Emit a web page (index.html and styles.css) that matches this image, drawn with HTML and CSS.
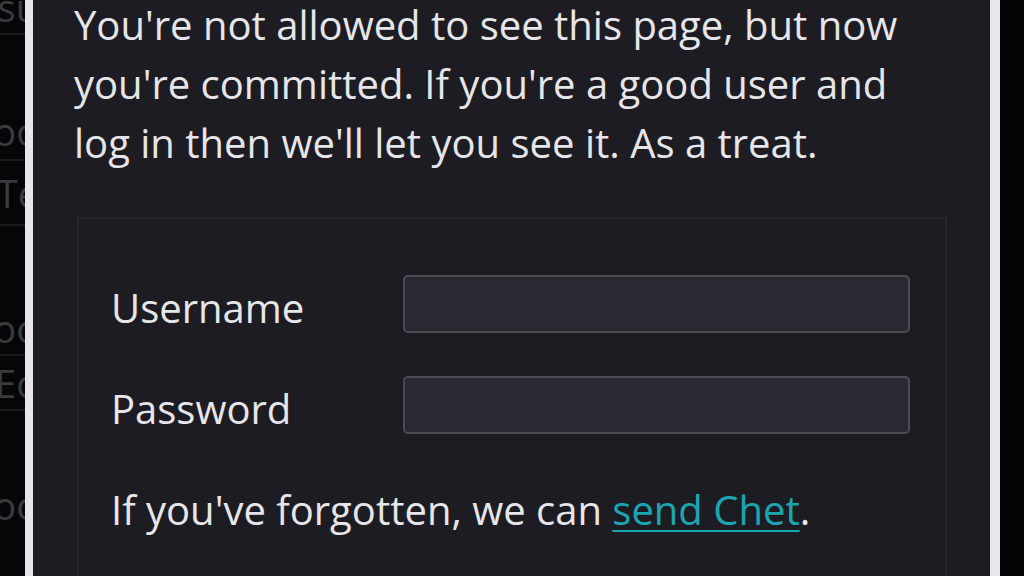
FILE: index.html
```html
<!DOCTYPE html>
<html lang="en">
<head>
<meta charset="utf-8">
<title>Log in</title>
<link rel="stylesheet" href="styles.css">
</head>
<body>
<div class="page">
  <div class="backdrop" aria-hidden="true">
    <div class="bg-row r1"><span>Issu</span></div>
    <div class="bg-row r2"><span>Too</span></div>
    <div class="bg-row r3"><span>Te</span></div>
    <div class="bg-row r4"><span>Too</span></div>
    <div class="bg-row r5"><span>Eo</span></div>
    <div class="bg-row r6"><span>Too</span></div>
  </div>
  <div class="dialog">
    <p class="intro">You're not allowed to see this page, but now you're committed. If you're a good user and log in then we'll let you see it. As a treat.</p>
    <form class="login">
      <div class="fields">
        <label class="label" for="user">Username</label>
        <input class="input" id="user" type="text">
        <label class="label" for="pass">Password</label>
        <input class="input" id="pass" type="password">
      </div>
      <p class="forgot">If you've forgotten, we can <a href="#" class="link">send Chet</a>.</p>
    </form>
  </div>
  <div class="outside"></div>
</div>
</body>
</html>
```
FILE: styles.css
```css
html, body {
  margin: 0;
  padding: 0;
}
body {
  background: #050508;
  width: 1024px;
  height: 576px;
  overflow: hidden;
  font-family: "Open Sans", "Noto Sans", sans-serif;
  color: #e6e6ea;
}
.page {
  display: flex;
  height: 576px;
}
.backdrop {
  width: 25px;
  flex: none;
  background: #060608;
  overflow: hidden;
  display: flex;
  flex-direction: column;
}
.bg-row {
  display: flex;
  justify-content: flex-end;
  align-items: center;
  border-bottom: 2px solid #1a1a1d;
  color: #3a3a3f;
  font-size: 38px;
  white-space: nowrap;
  overflow: hidden;
}
.bg-row span { margin-right: -14px; }
.r1 { height: 33px; align-items: flex-end; }
.r2 { height: 122px; align-items: flex-end; padding-bottom: 2px; }
.r3 { height: 63px; }
.r4 { height: 128px; align-items: flex-end; }
.r5 { height: 53px; }
.r6 { height: 120px; border-bottom: 0; align-items: flex-end; }
.dialog {
  width: 975px;
  flex: none;
  background: #1d1c22;
  border-left: 8px solid #e6e6ec;
  border-right: 10px solid #e6e6ec;
  padding: 0 43px 0 41px;
  box-sizing: border-box;
}
.intro {
  margin: -5px 0 0;
  font-size: 40px;
  line-height: 59px;
}
.login {
  margin: 45px 0 0 3px;
  border: 2px solid #26252b;
  border-bottom: 0;
  padding: 56px 35px 40px 32px;
}
.fields {
  display: grid;
  grid-template-columns: 292px 1fr;
  row-gap: 43px;
  align-items: center;
}
.label {
  font-size: 40px;
  line-height: 50px;
  padding-top: 8px;
}
.input {
  height: 58px;
  box-sizing: border-box;
  background: #2a2833;
  border: 2px solid #4c4b54;
  border-radius: 5px;
  margin: 0;
}
.forgot {
  margin: 46px 0 0;
  font-size: 40px;
  line-height: 59px;
}
.link {
  color: #1aa6b1;
  text-decoration: underline;
  text-decoration-thickness: 2px;
  text-underline-offset: 5px;
}
.outside {
  flex: 1;
  background: #050508;
}
```
